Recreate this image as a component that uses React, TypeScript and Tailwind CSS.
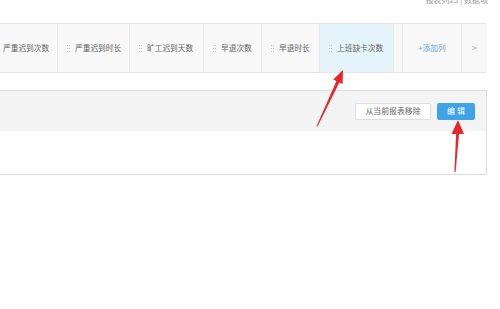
import { ReactNode } from 'react'

type Col = { label: string; width: string; grip?: boolean; active?: boolean }

const columns: Col[] = [
  { label: '严重迟到次数', width: 'w-[58px]', grip: false },
  { label: '严重迟到时长', width: 'w-[72px]', grip: true },
  { label: '旷工迟到天数', width: 'w-[74px]', grip: true },
  { label: '早退次数', width: 'w-[58px]', grip: true },
  { label: '早退时长', width: 'w-[58px]', grip: true },
  { label: '上班缺卡次数', width: 'w-[74px]', grip: true, active: true },
]

function Grip() {
  return (
    <span className="grid grid-cols-2 gap-x-[1px] gap-y-[2px] mr-[5px]">
      {[0, 1, 2, 3, 4, 5].map((i) => (
        <span key={i} className="block w-[1px] h-[1px] bg-[#c4c4c4]" />
      ))}
    </span>
  )
}

function HeaderCell({ children, className }: { children: ReactNode; className: string }) {
  return (
    <div className={`flex items-center h-full border-r border-[#e8e8e8] ${className}`}>
      {children}
    </div>
  )
}

export default function App() {
  return (
    <div
      className="relative w-[500px] h-[309px] overflow-hidden bg-white text-[#666]"
      style={{ fontFamily: '"Noto Sans CJK SC", "Noto Sans", sans-serif' }}
    >
      {/* 顶部说明 */}
      <div className="flex justify-end pr-[12px] h-[23px]">
        <span className="-mt-[6px] text-[8px] leading-[12px] text-[#999]">报表列23 | 数据项</span>
      </div>

      {/* 表头 */}
      <div className="flex w-[487px] h-[50px] border-y border-[#e6e6e6] bg-[#f8f8f8] text-[7.7px]">
        {columns.map((c) => (
          <HeaderCell
            key={c.label}
            className={`${c.width} ${c.grip ? 'pl-[9px]' : 'pl-[3px]'} ${c.active ? 'bg-[#e5f3fb]' : ''}`}
          >
            {c.grip && <Grip />}
            <span className="whitespace-nowrap">{c.label}</span>
          </HeaderCell>
        ))}
        <HeaderCell className="w-[9px]">{null}</HeaderCell>
        <HeaderCell className="w-[59px] justify-center text-[#5ea3d6]">
          <span className="whitespace-nowrap">+添加列</span>
        </HeaderCell>
        <div className="flex-1 flex items-center justify-center text-[#aaa] text-[9px]">&gt;</div>
      </div>

      <div className="h-[17px]" />

      {/* 数据项区域 */}
      <div className="w-[487px] border-y border-r border-[#dcdcdc]">
        <div className="flex items-center justify-end gap-[6px] pr-[11px] h-[40px] bg-[#f4f4f4]">
          <button className="w-[76px] h-[17px] bg-white border border-[#dedede] text-[7.9px] text-[#666] rounded-[1px]">
            从当前报表移除
          </button>
          <button className="w-[38px] h-[17px] pl-[2px] bg-[#3fa3e8] text-white text-[7.9px] tracking-[2px] rounded-[2px]">
            编辑
          </button>
        </div>
        <div className="h-[43px] bg-white" />
      </div>

      {/* 标注箭头 */}
      <svg className="absolute inset-0 pointer-events-none" width="500" height="309">
        <polygon points="316.5,126.2 317.6,126.6 340.3,80.6 337.2,79.2" fill="#e8262a" />
        <polygon points="343,70 342.6,84 333.2,79.6" fill="#e8262a" />
        <polygon points="454.4,172 455.6,172 459.2,132 456.2,132" fill="#e8262a" />
        <polygon points="458,120 464,134 451.5,134" fill="#e8262a" />
      </svg>
    </div>
  )
}
